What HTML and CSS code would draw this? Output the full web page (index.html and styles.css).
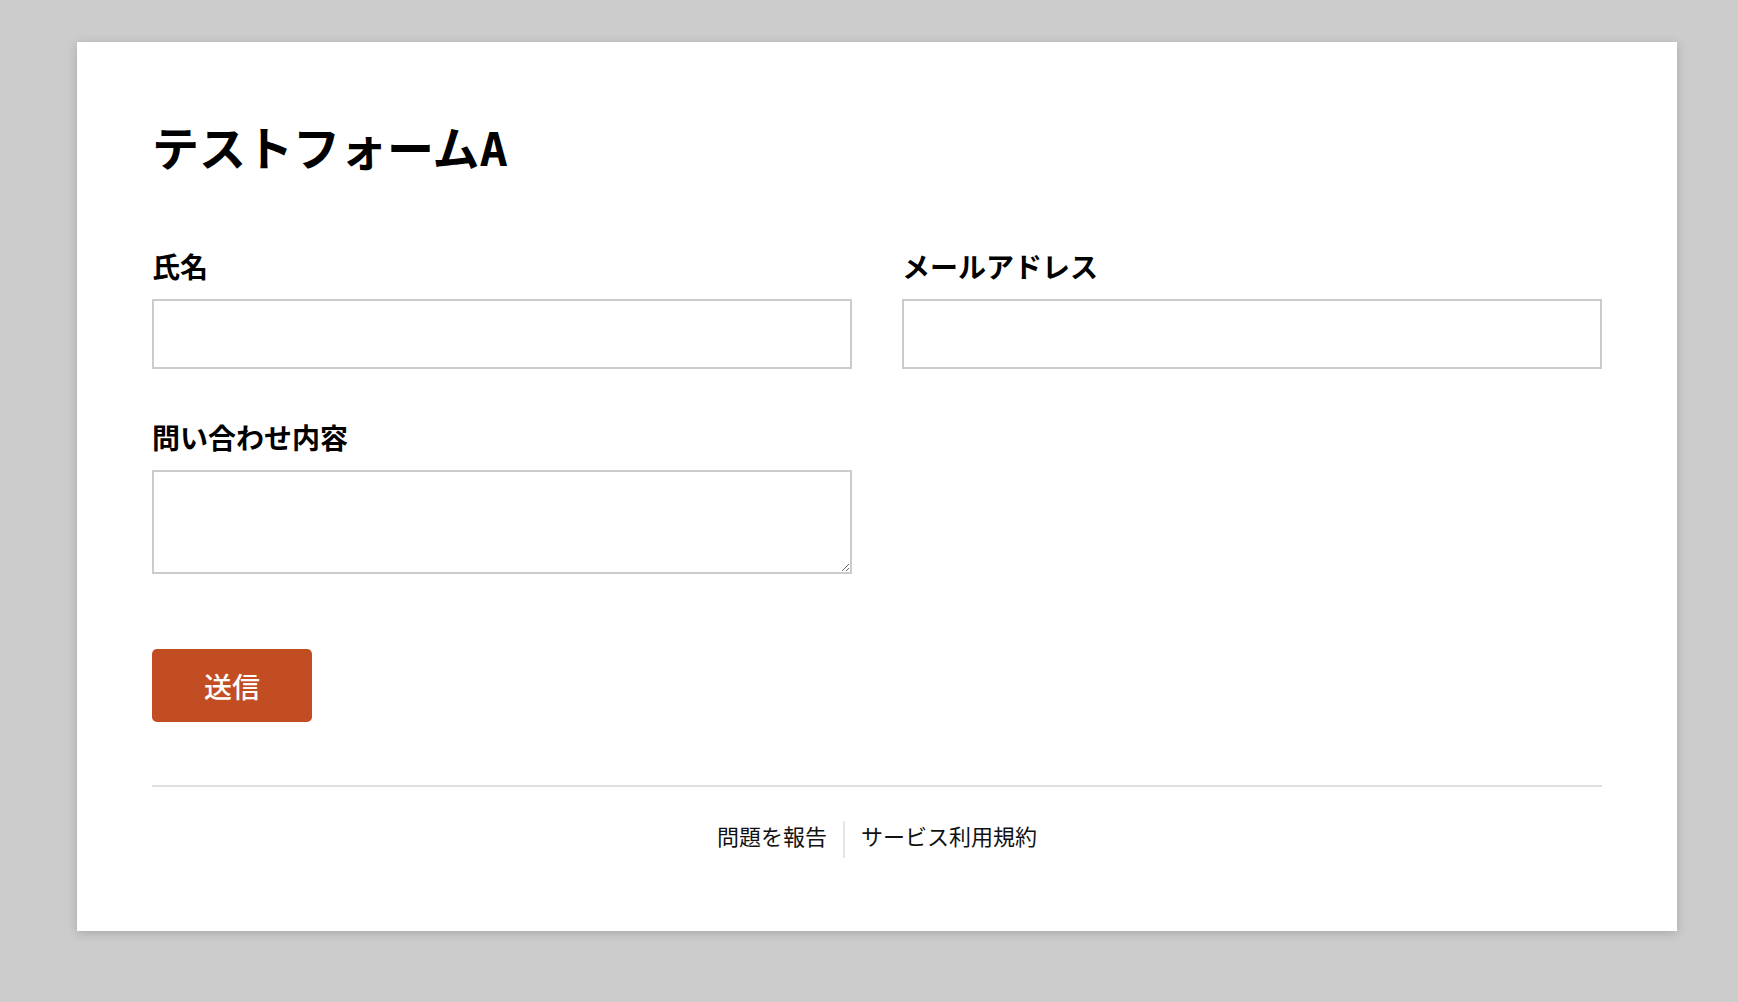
FILE: index.html
```html
<!DOCTYPE html>
<html lang="ja">
<head>
<meta charset="utf-8">
<title>テストフォームA</title>
<link rel="stylesheet" href="styles.css">
</head>
<body>
<main class="card">
  <h1 class="title">テストフォームA</h1>
  <form class="form">
    <div class="grid">
      <div class="field">
        <label class="label" for="name">氏名</label>
        <input class="input" id="name" type="text">
      </div>
      <div class="field">
        <label class="label" for="email">メールアドレス</label>
        <input class="input" id="email" type="email">
      </div>
      <div class="field">
        <label class="label" for="msg">問い合わせ内容</label>
        <textarea class="textarea" id="msg"></textarea>
      </div>
    </div>
    <button class="submit" type="button">送信</button>
  </form>
  <footer class="footer">
    <a class="footer-link" href="#">問題を報告</a>
    <a class="footer-link footer-link--sep" href="#">サービス利用規約</a>
  </footer>
</main>
</body>
</html>
```

FILE: styles.css
```css
html, body {
  margin: 0;
  padding: 0;
  background: #cccccc;
}

body {
  padding: 42px 0 70px 77px;
  font-family: "Noto Sans CJK JP", "Noto Sans", sans-serif;
  color: #000;
}

.card {
  width: 1600px;
  box-sizing: border-box;
  background: #ffffff;
  padding: 80px 75px 73px 75px;
  box-shadow: 0 2px 10px rgba(0, 0, 0, 0.18);
}

.title {
  margin: 0;
  font-family: "DejaVu Sans Mono", "Noto Sans CJK JP", monospace;
  font-size: 47px;
  line-height: 56px;
  font-weight: 700;
  color: #000;
}

.form {
  margin-top: 72px;
}

.grid {
  display: grid;
  grid-template-columns: 1fr 1fr;
  column-gap: 50px;
  row-gap: 52px;
}

.field {
  display: flex;
  flex-direction: column;
}

.label {
  font-size: 28px;
  line-height: 32px;
  font-weight: 700;
  color: #000;
  margin-bottom: 17px;
}

.input,
.textarea {
  box-sizing: border-box;
  width: 100%;
  border: 2px solid #cccccc;
  border-radius: 0;
  background: #fff;
  font-family: inherit;
  font-size: 20px;
  padding: 8px 12px;
  margin: 0;
  outline: none;
}

.input {
  height: 70px;
}

.textarea {
  height: 104px;
  resize: vertical;
  display: block;
}

.submit {
  display: block;
  margin-top: 75px;
  width: 160px;
  height: 73px;
  border: none;
  border-radius: 5px;
  background: #c34d23;
  color: #ffffff;
  font-family: "Noto Sans CJK JP", sans-serif;
  font-size: 28px;
  font-weight: 500;
  padding: 0;
  cursor: pointer;
}

.footer {
  margin-top: 63px;
  border-top: 2px solid #e0e0e0;
  padding-top: 34px;
  display: flex;
  justify-content: center;
}

.footer-link {
  font-size: 22px;
  line-height: 29px;
  padding: 0 16px 8px 16px;
  color: #111;
  text-decoration: none;
}

.footer-link--sep {
  border-left: 2px solid #e6e6e6;
}
```
